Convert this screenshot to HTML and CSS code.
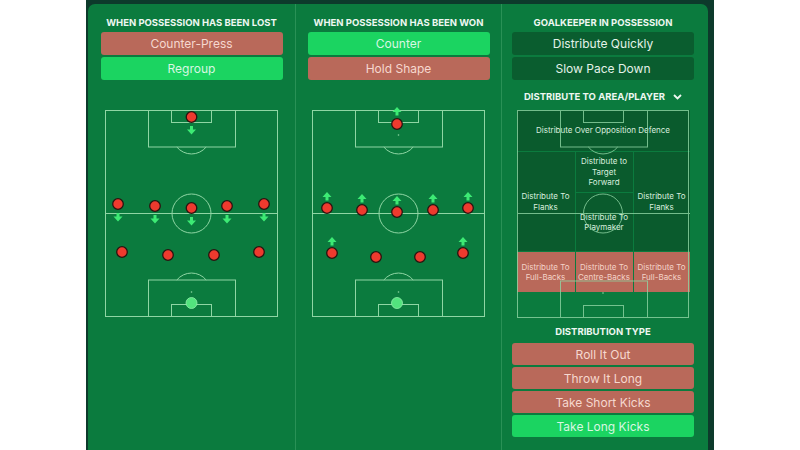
FILE: index.html
```html
<!DOCTYPE html>
<html>
<head>
<meta charset="utf-8">
<link rel="stylesheet" href="styles.css">
</head>
<body>
<div class="frame">
  <div class="panel">
    <section class="col">
      <h2 class="title">When possession has been lost</h2>
      <div class="btns">
        <div class="btn red">Counter-Press</div>
        <div class="btn green">Regroup</div>
      </div>
      <div class="pitch">
        <svg class="lines" width="173" height="207" viewBox="0 0 173 207">
          <g fill="none" stroke="#8fd6a4" stroke-width="1">
            <rect x="0.5" y="0.5" width="172" height="206"/>
            <line x1="0" y1="103.5" x2="173" y2="103.5"/>
            <circle cx="86.5" cy="103.5" r="19.5"/>
            <rect x="43.5" y="0.5" width="87" height="36.5"/>
            <rect x="66.5" y="0.5" width="40" height="12"/>
            <path d="M71.8 37 A19 19 0 0 0 101.2 37"/>
            <rect x="43.5" y="170" width="87" height="36.5"/>
            <rect x="66.5" y="194.5" width="40" height="12"/>
            <path d="M71.8 170 A19 19 0 0 1 101.2 170"/>
          </g>
          <g fill="#8fd6a4"><circle cx="86.5" cy="182" r="0.8"/></g>
          <g fill="#ee3a2e" stroke="#2a1410" stroke-width="1.3">
            <circle cx="86.5" cy="7" r="5.3"/>
            <circle cx="13" cy="94" r="5.3"/>
            <circle cx="50" cy="96" r="5.3"/>
            <circle cx="86.5" cy="98" r="5.3"/>
            <circle cx="122" cy="96" r="5.3"/>
            <circle cx="159" cy="94" r="5.3"/>
            <circle cx="17" cy="142" r="5.3"/>
            <circle cx="63" cy="145" r="5.3"/>
            <circle cx="109" cy="145" r="5.3"/>
            <circle cx="154" cy="142" r="5.3"/>
          </g>
          <circle cx="86.5" cy="193" r="5.5" fill="#52e47e" stroke="#8ff0aa" stroke-width="0.8"/>
          <g fill="#3dea74">
            <path transform="translate(86.5,16)" d="M-1.5 0 H1.5 V3.5 H4.5 L0 8.5 L-4.5 3.5 H-1.5 Z"/>
            <path transform="translate(13,103)" d="M-1.5 0 H1.5 V3.5 H4.5 L0 8.5 L-4.5 3.5 H-1.5 Z"/>
            <path transform="translate(50,105)" d="M-1.5 0 H1.5 V3.5 H4.5 L0 8.5 L-4.5 3.5 H-1.5 Z"/>
            <path transform="translate(86.5,107)" d="M-1.5 0 H1.5 V3.5 H4.5 L0 8.5 L-4.5 3.5 H-1.5 Z"/>
            <path transform="translate(122,105)" d="M-1.5 0 H1.5 V3.5 H4.5 L0 8.5 L-4.5 3.5 H-1.5 Z"/>
            <path transform="translate(159,103)" d="M-1.5 0 H1.5 V3.5 H4.5 L0 8.5 L-4.5 3.5 H-1.5 Z"/>
          </g>
        </svg>
      </div>
    </section>

    <section class="col">
      <h2 class="title">When possession has been won</h2>
      <div class="btns">
        <div class="btn green">Counter</div>
        <div class="btn red">Hold Shape</div>
      </div>
      <div class="pitch">
        <svg class="lines" width="173" height="207" viewBox="0 0 173 207">
          <g fill="none" stroke="#8fd6a4" stroke-width="1">
            <rect x="0.5" y="0.5" width="172" height="206"/>
            <line x1="0" y1="103.5" x2="173" y2="103.5"/>
            <circle cx="86.5" cy="103.5" r="19.5"/>
            <rect x="43.5" y="0.5" width="87" height="36.5"/>
            <rect x="66.5" y="0.5" width="40" height="12"/>
            <path d="M71.8 37 A19 19 0 0 0 101.2 37"/>
            <rect x="43.5" y="170" width="87" height="36.5"/>
            <rect x="66.5" y="194.5" width="40" height="12"/>
            <path d="M71.8 170 A19 19 0 0 1 101.2 170"/>
          </g>
          <g fill="#8fd6a4"><circle cx="86.5" cy="25" r="0.8"/><circle cx="86.5" cy="182" r="0.8"/></g>
          <g fill="#ee3a2e" stroke="#2a1410" stroke-width="1.3">
            <circle cx="85" cy="14" r="5.3"/>
            <circle cx="15" cy="98" r="5.3"/>
            <circle cx="50" cy="100" r="5.3"/>
            <circle cx="85" cy="102" r="5.3"/>
            <circle cx="121" cy="100" r="5.3"/>
            <circle cx="156" cy="98" r="5.3"/>
            <circle cx="20" cy="143" r="5.3"/>
            <circle cx="64" cy="147" r="5.3"/>
            <circle cx="108" cy="147" r="5.3"/>
            <circle cx="151" cy="143" r="5.3"/>
          </g>
          <circle cx="85" cy="193" r="5.5" fill="#52e47e" stroke="#8ff0aa" stroke-width="0.8"/>
          <g fill="#3dea74">
            <path transform="translate(85,-3)" d="M-1.5 8.5 H1.5 V5 H4.5 L0 0 L-4.5 5 H-1.5 Z"/>
            <path transform="translate(15,82)" d="M-1.5 8.5 H1.5 V5 H4.5 L0 0 L-4.5 5 H-1.5 Z"/>
            <path transform="translate(50,84)" d="M-1.5 8.5 H1.5 V5 H4.5 L0 0 L-4.5 5 H-1.5 Z"/>
            <path transform="translate(85,86)" d="M-1.5 8.5 H1.5 V5 H4.5 L0 0 L-4.5 5 H-1.5 Z"/>
            <path transform="translate(121,84)" d="M-1.5 8.5 H1.5 V5 H4.5 L0 0 L-4.5 5 H-1.5 Z"/>
            <path transform="translate(156,82)" d="M-1.5 8.5 H1.5 V5 H4.5 L0 0 L-4.5 5 H-1.5 Z"/>
            <path transform="translate(20,127)" d="M-1.5 8.5 H1.5 V5 H4.5 L0 0 L-4.5 5 H-1.5 Z"/>
            <path transform="translate(151,127)" d="M-1.5 8.5 H1.5 V5 H4.5 L0 0 L-4.5 5 H-1.5 Z"/>
          </g>
        </svg>
      </div>
    </section>

    <section class="col col-gk">
      <h2 class="title">Goalkeeper in possession</h2>
      <div class="btns">
        <div class="btn dark">Distribute Quickly</div>
        <div class="btn dark">Slow Pace Down</div>
      </div>
      <h3 class="subtitle">Distribute to area/player
        <svg class="chev" width="9" height="6" viewBox="0 0 9 6"><path d="M1 1 L4.5 4.5 L8 1" fill="none" stroke="#eef7f1" stroke-width="1.8"/></svg>
      </h3>
      <div class="pitch pitch-gk">
        <div class="zones">
          <div class="zone z-over">Distribute Over Opposition Defence</div>
          <div class="zone z-flank-l">Distribute To<br>Flanks</div>
          <div class="zone z-target">Distribute to<br>Target<br>Forward</div>
          <div class="zone z-play">Distribute To<br>Playmaker</div>
          <div class="zone z-flank-r">Distribute To<br>Flanks</div>
          <div class="zone zred">Distribute To<br>Full-Backs</div>
          <div class="zone zred">Distribute To<br>Centre-Backs</div>
          <div class="zone zred">Distribute To<br>Full-Backs</div>
        </div>
        <svg class="lines over" width="173" height="208" viewBox="0 0 173 208">
          <g fill="none" stroke="#8fd6a4" stroke-width="1" opacity="0.8">
            <rect x="0.5" y="0.5" width="171" height="207"/>
            <line x1="0" y1="103.5" x2="173" y2="103.5"/>
            <circle cx="86" cy="103.5" r="19.5"/>
            <rect x="43.5" y="0.5" width="87" height="36.5"/>
            <rect x="66.5" y="0.5" width="40" height="12"/>
            <path d="M71.3 37 A19 19 0 0 0 100.7 37"/>
            <rect x="43.5" y="171" width="87" height="36.5"/>
            <rect x="66.5" y="195.5" width="40" height="12"/>
          </g>
          <circle cx="86" cy="183" r="0.8" fill="#8fd6a4"/>
        </svg>
      </div>
      <h3 class="subtitle sub2">Distribution type</h3>
      <div class="btns btns-tight">
        <div class="btn red">Roll It Out</div>
        <div class="btn red">Throw It Long</div>
        <div class="btn red">Take Short Kicks</div>
        <div class="btn green">Take Long Kicks</div>
      </div>
    </section>
  </div>
</div>
</body>
</html>
```

FILE: styles.css
```css
body {
  margin: 0;
  background: #ffffff;
  font-family: Inter, "Noto Sans", sans-serif;
}

.frame {
  margin-left: 86px;
  width: 628px;
  height: 450px;
  box-sizing: border-box;
  padding: 4px 6px 0 2px;
  background: #0d3a2b;
}

.panel {
  height: 100%;
  background: #0b7b3e;
  border-radius: 7px 7px 0 0;
  display: grid;
  grid-template-columns: 207px 206px 207px;
}

.col {
  display: flex;
  flex-direction: column;
  align-items: center;
  padding-top: 13px;
}

.col + .col {
  border-left: 1px solid rgba(150, 225, 175, 0.22);
}

.col-gk {
  padding-right: 4px;
}

.title,
.subtitle {
  margin: 0;
  font-size: 9.5px;
  font-weight: 700;
  line-height: 12px;
  color: #eef7f1;
  text-transform: uppercase;
  white-space: nowrap;
}

.subtitle {
  margin-top: 11px;
  display: flex;
  align-items: center;
}

.chev {
  margin-left: 8px;
}

.sub2 {
  margin-top: 8px;
}

.btns {
  display: flex;
  flex-direction: column;
  gap: 2px;
  margin-top: 3px;
}

.btns-tight {
  margin-top: 5px;
}

.btn {
  width: 182px;
  height: 23px;
  border-radius: 3px;
  display: flex;
  align-items: center;
  justify-content: center;
  font-size: 12px;
}

.btns-tight .btn {
  height: 22px;
}

.red {
  background: #b9695a;
  color: #f6d8cf;
}

.green {
  background: #1bd461;
  color: #d8f7e2;
}

.dark {
  background: #0a5d2f;
  color: #e4f2e8;
}

.pitch {
  margin-top: 30px;
  width: 173px;
  height: 207px;
  position: relative;
}

.lines {
  display: block;
  overflow: visible;
}

.pitch-gk {
  margin-top: 7px;
  width: 173px;
  height: 208px;
}

.zones {
  display: grid;
  grid-template-columns: 58px 57px 1fr;
  grid-template-rows: 41px 40px 58px 40px 1fr;
  gap: 1px;
  height: 100%;
}

.zone {
  display: flex;
  align-items: center;
  justify-content: center;
  text-align: center;
  font-size: 8px;
  line-height: 10.5px;
  background: #0a5b2d;
  color: #d9eedf;
}

.z-over {
  grid-column: 1 / 4;
}

.z-flank-l {
  grid-column: 1;
  grid-row: 2 / 4;
}

.z-target {
  grid-column: 2;
  grid-row: 2;
}

.z-play {
  grid-column: 2;
  grid-row: 3;
}

.z-flank-r {
  grid-column: 3;
  grid-row: 2 / 4;
}

.zred {
  grid-row: 4;
  background: #b9695a;
  color: #f4d3c8;
}

.over {
  position: absolute;
  left: 0;
  top: 0;
  pointer-events: none;
}
```
